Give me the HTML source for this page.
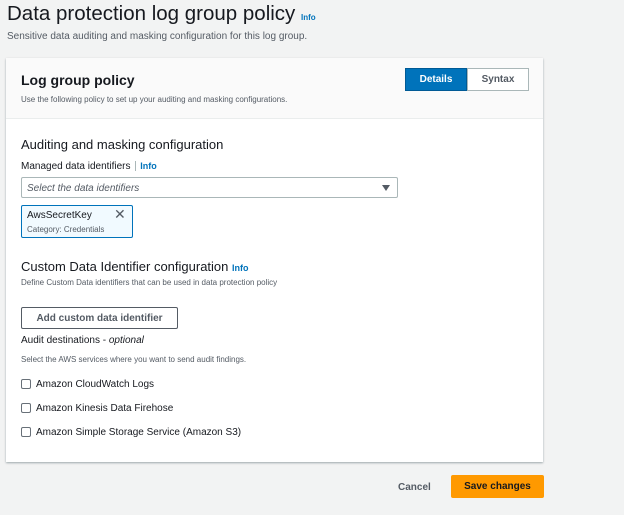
<!DOCTYPE html>
<html><head><style>
*{margin:0;padding:0;box-sizing:border-box}
body{width:624px;height:515px;background:#f2f3f3;font-family:"Liberation Sans",sans-serif;color:#16191f;position:relative;overflow:hidden}
.a{position:absolute;white-space:nowrap}
.info{color:#0073bb;font-weight:bold;font-size:9px}
.cb{position:absolute;width:10px;height:10px;border:1px solid #687078;border-radius:2px;background:#fff}
</style></head><body>
<div class="a" style="left:7px;top:2px;font-size:20.5px;">Data protection log group policy <span class="info" style="font-size:8px">Info</span></div>
<div class="a" style="left:7px;top:31px;font-size:10px;color:#545b64">Sensitive data auditing and masking configuration for this log group.</div>

<div class="a" style="left:6px;top:58px;width:537px;height:404px;background:#fff;box-shadow:0 1px 2px rgba(0,28,36,.35);"></div>
<div class="a" style="left:6px;top:58px;width:537px;height:61px;background:#fafafa;border-bottom:1px solid #eaeded"></div>
<div class="a" style="left:21px;top:72px;font-size:14px;font-weight:bold">Log group policy</div>
<div class="a" style="left:21px;top:95px;font-size:8px;color:#545b64">Use the following policy to set up your auditing and masking configurations.</div>
<div class="a" style="left:405px;top:68px;width:62px;height:23px;background:#0073bb;border:1px solid #005a95;color:#fff;font-size:10px;font-weight:bold;text-align:center;line-height:21px">Details</div>
<div class="a" style="left:467px;top:68px;width:62px;height:23px;background:#fff;border:1px solid #aab7b8;color:#545b64;font-size:10px;font-weight:bold;text-align:center;line-height:21px">Syntax</div>

<div class="a" style="left:21px;top:137px;font-size:13px">Auditing and masking configuration</div>
<div class="a" style="left:21px;top:161px;font-size:10px">Managed data identifiers <span style="border-left:1px solid #aab7b8;margin-left:2px;padding-left:4px" class="info">Info</span></div>
<div class="a" style="left:21px;top:177px;width:377px;height:21px;border:1px solid #aab7b8;border-radius:2px;background:#fff"></div>
<div class="a" style="left:27px;top:183px;font-size:10px;font-style:italic;color:#545b64">Select the data identifiers</div>
<div class="a" style="left:382px;top:185px;width:0;height:0;border-left:4px solid transparent;border-right:4px solid transparent;border-top:6px solid #545b64"></div>
<div class="a" style="left:21px;top:205px;width:112px;height:33px;background:#f1faff;border:1px solid #0073bb;border-radius:2px"></div>
<div class="a" style="left:27px;top:210px;font-size:10px">AwsSecretKey</div>
<div class="a" style="left:27px;top:225px;font-size:8px;color:#545b64">Category: Credentials</div>
<div class="a" style="left:114px;top:206px;font-size:14px;color:#545b64">✕</div>

<div class="a" style="left:21px;top:259px;font-size:13px">Custom Data Identifier configuration <span class="info">Info</span></div>
<div class="a" style="left:21px;top:278px;font-size:8px;color:#545b64">Define Custom Data identifiers that can be used in data protection policy</div>
<div class="a" style="left:21px;top:307px;width:157px;height:22px;border:1px solid #545b64;border-radius:2px;background:#fff;font-size:10px;font-weight:bold;color:#545b64;text-align:center;line-height:21px">Add custom data identifier</div>
<div class="a" style="left:21px;top:335px;font-size:10px">Audit destinations - <i>optional</i></div>
<div class="a" style="left:21px;top:355px;font-size:8px;color:#545b64">Select the AWS services where you want to send audit findings.</div>
<div class="cb" style="left:21px;top:379px"></div><div class="a" style="left:36px;top:379px;font-size:10px">Amazon CloudWatch Logs</div>
<div class="cb" style="left:21px;top:403px"></div><div class="a" style="left:36px;top:403px;font-size:10px">Amazon Kinesis Data Firehose</div>
<div class="cb" style="left:21px;top:427px"></div><div class="a" style="left:36px;top:427px;font-size:10px">Amazon Simple Storage Service (Amazon S3)</div>

<div class="a" style="left:398px;top:482px;font-size:10px;font-weight:bold;color:#545b64">Cancel</div>
<div class="a" style="left:451px;top:475px;width:93px;height:23px;background:#ff9900;border-radius:2px;font-size:10px;font-weight:bold;text-align:center;line-height:24px">Save changes</div>
</body></html>
